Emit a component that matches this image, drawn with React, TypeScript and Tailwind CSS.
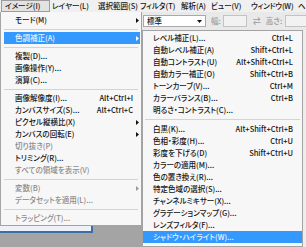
import React from "react";

type It = { l: string; s?: string; arrow?: boolean; d?: boolean; a?: boolean } | "sep";

const leftItems: It[] = [
  { l: "モード(M)", arrow: true },
  "sep",
  { l: "色調補正(A)", arrow: true, a: true },
  "sep",
  { l: "複製(D)..." },
  { l: "画像操作(Y)..." },
  { l: "演算(C)..." },
  "sep",
  { l: "画像解像度(I)...", s: "Alt+Ctrl+I" },
  { l: "カンバスサイズ(S)...", s: "Alt+Ctrl+C" },
  { l: "ピクセル縦横比(X)", arrow: true },
  { l: "カンバスの回転(E)", arrow: true },
  { l: "切り抜き(P)", d: true },
  { l: "トリミング(R)..." },
  { l: "すべての領域を表示(V)", d: true },
  "sep",
  { l: "変数(B)", d: true, arrow: true },
  { l: "データセットを適用(L)...", d: true },
  "sep",
  { l: "トラッピング(T)...", d: true },
];

const subItems: It[] = [
  { l: "レベル補正(L)...", s: "Ctrl+L" },
  { l: "自動レベル補正(A)", s: "Shift+Ctrl+L" },
  { l: "自動コントラスト(U)", s: "Alt+Shift+Ctrl+L" },
  { l: "自動カラー補正(O)", s: "Shift+Ctrl+B" },
  { l: "トーンカーブ(V)...", s: "Ctrl+M" },
  { l: "カラーバランス(B)...", s: "Ctrl+B" },
  { l: "明るさ・コントラスト(C)..." },
  "sep",
  { l: "白黒(K)...", s: "Alt+Shift+Ctrl+B" },
  { l: "色相・彩度(H)...", s: "Ctrl+U" },
  { l: "彩度を下げる(D)", s: "Shift+Ctrl+U" },
  { l: "カラーの適用(M)..." },
  { l: "色の置き換え(R)..." },
  { l: "特定色域の選択(S)..." },
  { l: "チャンネルミキサー(X)..." },
  { l: "グラデーションマップ(G)..." },
  { l: "レンズフィルタ(F)..." },
  { l: "シャドウ・ハイライト(W)...", a: true },
];

function Arrow({ color }: { color: string }) {
  return (
    <svg width="3" height="5" viewBox="0 0 3 5">
      <polygon points="0,0 3,2.5 0,5" fill={color} />
    </svg>
  );
}

function LeftRow({ it }: { it: It }) {
  if (it === "sep")
    return (
      <div className="h-[6px] flex items-center mx-[3px]">
        <div className="w-full h-0 border-t border-[#d3d3d3]" />
      </div>
    );
  const cls = it.a
    ? "bg-[#3399ff] text-[#e8f3ff]"
    : it.d
    ? "text-[#8c8c8c]"
    : "text-[#151515]";
  return (
    <div className={`flex items-center h-[12px] ml-[3px] mr-[1px] pl-[11px] ${cls}`}>
      <span className="flex-1 whitespace-nowrap">{it.l}</span>
      {it.s && <span className="whitespace-nowrap">{it.s}</span>}
      <span className="w-[7px] flex items-center justify-end pr-[1px]">
        {it.arrow && <Arrow color={it.a ? "#ffffff" : it.d ? "#9a9a9a" : "#111111"} />}
      </span>
    </div>
  );
}

function SubRow({ it }: { it: It }) {
  if (it === "sep")
    return (
      <div className="h-[7px] flex items-center mx-[2px]">
        <div className="w-full h-0 border-t border-[#d3d3d3]" />
      </div>
    );
  const cls = it.a ? "bg-[#3399ff] text-[#e8f3ff]" : "text-[#151515]";
  return (
    <div className={`flex items-center h-[12px] pl-[10px] pr-[9px] ${cls}`}>
      <span className="flex-1 whitespace-nowrap">{it.l}</span>
      {it.s && <span className="whitespace-nowrap">{it.s}</span>}
    </div>
  );
}

export default function App() {
  return (
    <div className="w-[306px] h-[247px] overflow-hidden bg-[#ededed] text-[7.5px] leading-[12px] font-medium font-['Noto_Sans_CJK_JP','Noto_Sans',sans-serif] [font-feature-settings:'palt'] flex flex-col">
      {/* menu bar */}
      <div className="h-[12px] flex items-stretch bg-[#f0f0f0] text-[#151515] whitespace-nowrap overflow-hidden">
        <div className="ml-[1px] w-[49px] shrink-0 border border-[#9c9c9c] bg-[#e2e2e2] flex items-center pl-[3px] leading-[10px]">
          イメージ(I)
        </div>
        <div className="w-[46px] shrink-0 flex items-center pl-[2px]">レイヤー(L)</div>
        <div className="w-[42px] shrink-0 flex items-center pl-[2px]">選択範囲(S)</div>
        <div className="w-[41px] shrink-0 flex items-center pl-[2px]">フィルタ(T)</div>
        <div className="w-[30px] shrink-0 flex items-center pl-[2px]">解析(A)</div>
        <div className="w-[40px] shrink-0 flex items-center pl-[2px]">ビュー(V)</div>
        <div className="w-[48px] shrink-0 flex items-center pl-[2px] tracking-[-0.2px]">ウィンドウ(W)</div>
        <div className="flex-1 flex items-center pl-[1px]">ヘ</div>
      </div>
      <div className="flex flex-1 min-h-0">
        {/* left column */}
        <div className="w-[142px] flex flex-col">
          <div className="bg-[#f7f7f7] border-l border-r border-b border-[#a3a3a3] pt-[1px] pb-[1px]">
            <div className="h-[1px]" />
            {leftItems.map((it, i) => (
              <LeftRow key={i} it={it} />
            ))}
          </div>
          <div className="flex-1 bg-[#a4a4a4]">
            <div className="w-[93px] h-[7px] bg-[#eef2f7] border-b-2 border-r-2 border-[#3c6ea5]" />
          </div>
        </div>
        {/* right column */}
        <div className="flex-1 flex flex-col">
          <div className="h-[18px] flex items-center bg-[#e9e9e9] text-[#9a9a9a]">
            <div className="ml-[1px] w-[63px] h-[12px] bg-white border border-[#a9a9a9] flex items-center justify-between pl-[3px] pr-[3px] text-[#151515] leading-[10px]">
              <span>標準</span>
              <svg width="5" height="3" viewBox="0 0 5 3">
                <polygon points="0,0 5,0 2.5,3" fill="#111" />
              </svg>
            </div>
            <span className="ml-[5px] leading-[10px]">幅:</span>
            <div className="ml-[2px] w-[24px] h-[12px] bg-[#f2f2f2] border border-[#c3c3c3]" />
            <span className="ml-[6px] text-[8px] leading-[10px]">⇄</span>
            <span className="ml-[5px] leading-[10px]">高さ:</span>
            <div className="ml-[3px] flex-1 h-[12px] bg-[#f2f2f2] border border-[#c3c3c3] border-r-0" />
          </div>
          <div className="flex flex-1 min-h-0">
            <div className="w-[161px] bg-[#f7f7f7] border border-[#a3a3a3] pt-[1px] pb-[2px]">
              {subItems.map((it, i) => (
                <SubRow key={i} it={it} />
              ))}
            </div>
            <div className="flex-1 bg-[#ededed]" />
          </div>
        </div>
      </div>
    </div>
  );
}
